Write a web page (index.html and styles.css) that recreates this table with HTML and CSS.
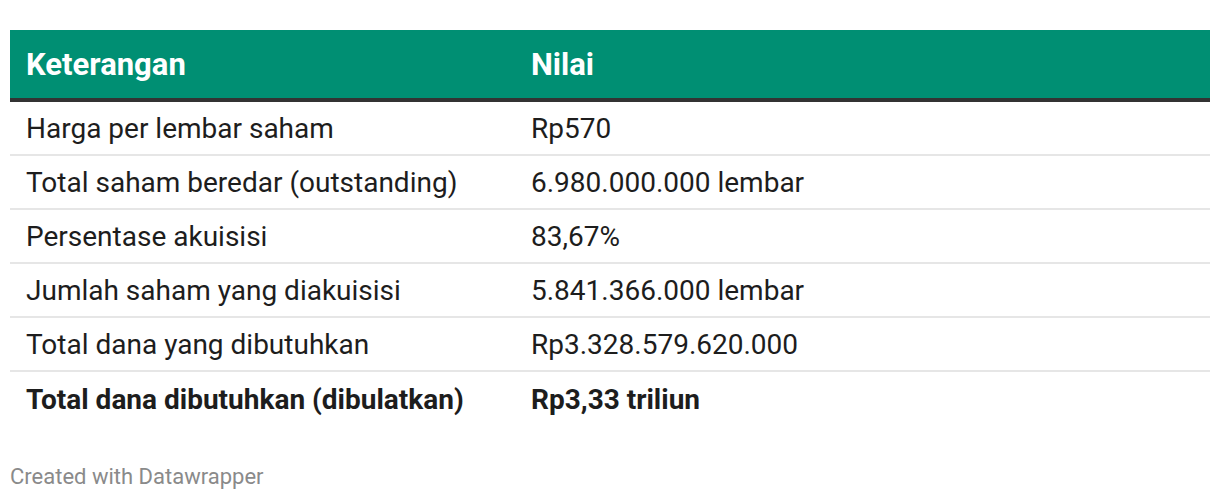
FILE: index.html
```html
<!DOCTYPE html>
<html>
<head>
<meta charset="utf-8">
<link rel="stylesheet" href="styles.css">
</head>
<body>
<div class="chart">
  <div class="table">
    <div class="row head">
      <div class="cell">Keterangan</div>
      <div class="cell">Nilai</div>
    </div>
    <div class="row">
      <div class="cell">Harga per lembar saham</div>
      <div class="cell">Rp570</div>
    </div>
    <div class="row">
      <div class="cell">Total saham beredar (outstanding)</div>
      <div class="cell">6.980.000.000 lembar</div>
    </div>
    <div class="row">
      <div class="cell">Persentase akuisisi</div>
      <div class="cell">83,67%</div>
    </div>
    <div class="row">
      <div class="cell">Jumlah saham yang diakuisisi</div>
      <div class="cell">5.841.366.000 lembar</div>
    </div>
    <div class="row">
      <div class="cell">Total dana yang dibutuhkan</div>
      <div class="cell">Rp3.328.579.620.000</div>
    </div>
    <div class="row total">
      <div class="cell">Total dana dibutuhkan (dibulatkan)</div>
      <div class="cell">Rp3,33 triliun</div>
    </div>
  </div>
  <div class="footer">Created with Datawrapper</div>
</div>
</body>
</html>
```

FILE: styles.css
```css
html, body {
  margin: 0;
  padding: 0;
  background: #ffffff;
}
body {
  font-family: Roboto, "Liberation Sans", sans-serif;
  color: #1d1d1d;
}
.chart {
  padding: 30px 10px 0 10px;
}
.table {
  display: flex;
  flex-direction: column;
}
.row {
  display: grid;
  grid-template-columns: 505px 1fr;
  height: 52px;
  align-items: center;
  border-bottom: 2px solid #e6e6e6;
  font-size: 28px;
}
.cell {
  padding: 0 16px;
  white-space: nowrap;
}
.row.head {
  height: 68px;
  background: #008f73;
  color: #ffffff;
  font-weight: 700;
  font-size: 31px;
  border-bottom: 4px solid #333333;
}
.row.total {
  border-bottom: none;
  font-weight: 700;
  height: 54px;
}
.footer {
  margin-top: 38px;
  font-size: 22px;
  color: #8a8a8a;
}
```
